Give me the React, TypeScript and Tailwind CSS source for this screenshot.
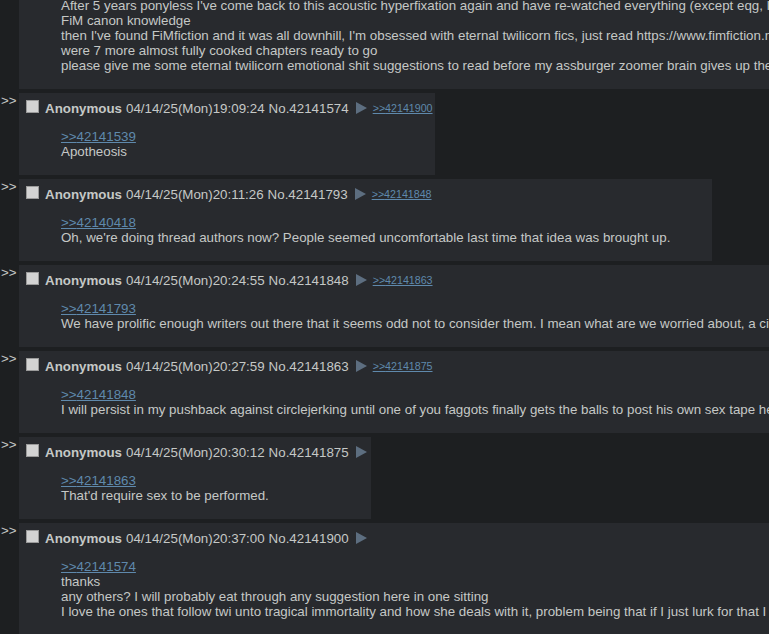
import React from 'react';

type Post = {
  time?: string;
  no?: string;
  backlinks?: string[];
  quote?: string;
  lines: string[];
};

const posts: Post[] = [
  {
    lines: [
      "After 5 years ponyless I've come back to this acoustic hyperfixation again and have re-watched everything (except eqg, I had enough of it) and",
      'FiM canon knowledge',
      "then I've found FiMfiction and it was all downhill, I'm obsessed with eternal twilicorn fics, just read https://www.fimfiction.net/story/ and there",
      'were 7 more almost fully cooked chapters ready to go',
      'please give me some eternal twilicorn emotional shit suggestions to read before my assburger zoomer brain gives up the search',
    ],
  },
  {
    time: '04/14/25(Mon)19:09:24',
    no: '42141574',
    backlinks: ['42141900'],
    quote: '42141539',
    lines: ['Apotheosis'],
  },
  {
    time: '04/14/25(Mon)20:11:26',
    no: '42141793',
    backlinks: ['42141848'],
    quote: '42140418',
    lines: ["Oh, we're doing thread authors now? People seemed uncomfortable last time that idea was brought up."],
  },
  {
    time: '04/14/25(Mon)20:24:55',
    no: '42141848',
    backlinks: ['42141863'],
    quote: '42141793',
    lines: [
      'We have prolific enough writers out there that it seems odd not to consider them. I mean what are we worried about, a circlejerk?',
    ],
  },
  {
    time: '04/14/25(Mon)20:27:59',
    no: '42141863',
    backlinks: ['42141875'],
    quote: '42141848',
    lines: [
      'I will persist in my pushback against circlejerking until one of you faggots finally gets the balls to post his own sex tape here',
    ],
  },
  {
    time: '04/14/25(Mon)20:30:12',
    no: '42141875',
    quote: '42141863',
    lines: ["That'd require sex to be performed."],
  },
  {
    time: '04/14/25(Mon)20:37:00',
    no: '42141900',
    quote: '42141574',
    lines: [
      'thanks',
      'any others? I will probably eat through any suggestion here in one sitting',
      'I love the ones that follow twi unto tragical immortality and how she deals with it, problem being that if I just lurk for that I never find',
    ],
  },
];

const MenuArrow = ({ gap }: { gap: boolean }) => (
  <svg
    width="11"
    height="12"
    viewBox="0 0 11 12"
    className={gap ? 'ml-[7px] mr-[6px] mb-[2px] shrink-0' : 'ml-[7px] mr-[2px] mb-[2px] shrink-0'}
  >
    <polygon points="0,0 11,6 0,12" fill="#5d6e80" />
  </svg>
);

const PostBox = ({ post, first }: { post: Post; first?: boolean }) => (
  <div className={first ? 'flex items-start -mt-[18px]' : 'flex items-start'}>
    <div className="w-[17px] mr-[2px] shrink-0 leading-[15px] text-[#c5c8c6] pl-px">&gt;&gt;</div>
    <div className="w-max bg-[#282a2e] px-[2px] py-[3px]">
      {post.time && (
        <div className="h-[20px] flex items-end whitespace-nowrap leading-[15px]">
          <div className="self-center ml-[5px] mr-[6px] w-[13px] h-[13px] bg-[#d3d3d3] border border-[#9a9a9a] shrink-0" />
          <span className="font-bold">Anonymous</span>
          <span className="ml-[4px]">{post.time}</span>
          <span className="ml-[4px]">No.{post.no}</span>
          <MenuArrow gap={!!post.backlinks} />
          {post.backlinks?.map((b) => (
            <a key={b} className="text-[10.67px] text-[#5f89ac] underline">
              &gt;&gt;{b}
            </a>
          ))}
        </div>
      )}
      <div className="my-[13px] ml-[40px] mr-[40px] leading-[15px] whitespace-nowrap">
        {post.quote && (
          <div>
            <a className="text-[#5f89ac] underline">&gt;&gt;{post.quote}</a>
          </div>
        )}
        {post.lines.map((l, i) => (
          <div key={i}>{l}</div>
        ))}
      </div>
    </div>
  </div>
);

export default function App() {
  return (
    <div
      className="w-[769px] h-[634px] overflow-hidden bg-[#1d1f21] text-[#c5c8c6] text-[13.33px]"
      style={{ fontFamily: '"Liberation Sans", Arial, sans-serif' }}
    >
      <div className="flex flex-col gap-[4px]">
        {posts.map((p, i) => (
          <PostBox key={i} post={p} first={i === 0} />
        ))}
      </div>
    </div>
  );
}
